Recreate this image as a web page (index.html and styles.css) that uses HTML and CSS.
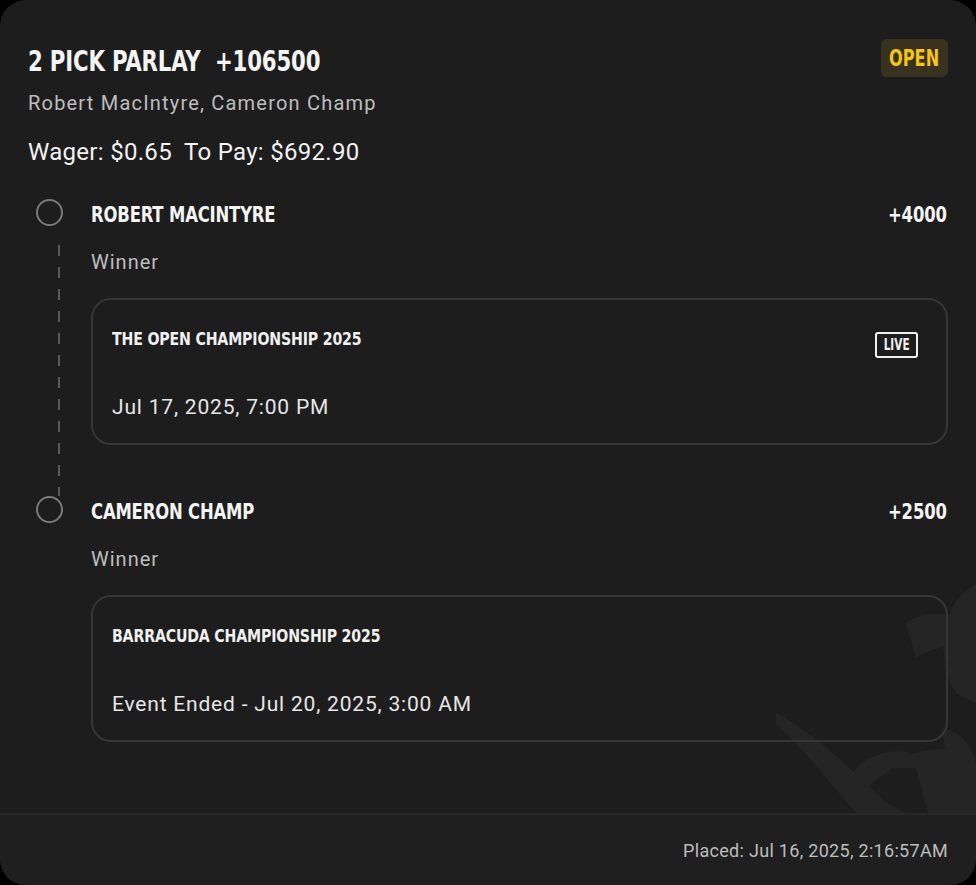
FILE: index.html
```html
<!DOCTYPE html>
<html>
<head>
<meta charset="utf-8">
<link rel="stylesheet" href="styles.css">
</head>
<body>
<div class="card">
  <svg class="watermark" width="240" height="260" viewBox="0 0 240 260" aria-hidden="true">
    <path d="M228 40 C 205 60, 200 110, 220 140 L 240 150 L 240 30 Z" />
    <path d="M170 70 C 190 55, 220 60, 240 70 L 240 95 C 215 90, 195 95, 180 105 Z" />
    <path d="M40 160 C 70 175, 110 210, 150 250 L 170 260 L 120 260 C 95 230, 70 200, 40 170 Z" />
    <path d="M150 215 C 170 200, 200 190, 225 200 L 232 260 L 192 260 L 180 215 Z" />
    <path d="M205 175 C 230 180, 240 200, 240 215 L 240 260 L 214 260 C 214 230, 212 205, 205 175 Z" />
    <path d="M120 215 C 135 200, 160 195, 175 200 L 130 235 C 120 235, 115 225, 120 215 Z" />
  </svg>
  <div class="main">
    <div class="header">
      <div class="header-text">
        <h1 class="title"><span class="squeeze">2 PICK PARLAY&nbsp; +106500</span></h1>
        <p class="players">Robert MacIntyre, Cameron Champ</p>
        <p class="wager">Wager: $0.65&nbsp; To Pay: $692.90</p>
      </div>
      <span class="status"><span class="squeeze-c">OPEN</span></span>
    </div>

    <div class="legs">
      <div class="leg">
        <div class="rail">
          <span class="dot"></span>
          <span class="dash"></span>
        </div>
        <div class="leg-body">
          <div class="leg-head">
            <span class="leg-name">ROBERT MACINTYRE</span>
            <span class="leg-odds">+4000</span>
          </div>
          <div class="leg-market">Winner</div>
          <div class="event">
            <div class="event-head">
              <span class="event-name">THE OPEN CHAMPIONSHIP 2025</span>
              <span class="live"><span class="squeeze-c">LIVE</span></span>
            </div>
            <div class="event-time">Jul 17, 2025, 7:00 PM</div>
          </div>
        </div>
      </div>

      <div class="leg last">
        <div class="rail">
          <span class="dot"></span>
        </div>
        <div class="leg-body">
          <div class="leg-head">
            <span class="leg-name">CAMERON CHAMP</span>
            <span class="leg-odds">+2500</span>
          </div>
          <div class="leg-market">Winner</div>
          <div class="event">
            <div class="event-head">
              <span class="event-name">BARRACUDA CHAMPIONSHIP 2025</span>
            </div>
            <div class="event-time">Event Ended - Jul 20, 2025, 3:00 AM</div>
          </div>
        </div>
      </div>
    </div>
  </div>
  <div class="footer">
    <span class="placed">Placed: Jul 16, 2025, 2:16:57AM</span>
  </div>
</div>
</body>
</html>
```

FILE: styles.css
```css
* { box-sizing: border-box; }
html, body { margin: 0; padding: 0; background: #000; }
body { width: 976px; height: 885px; overflow: hidden; font-family: Roboto, "Liberation Sans", sans-serif; }

.card {
  position: relative;
  width: 976px;
  height: 885px;
  background: #1d1d1d;
  border-radius: 26px;
  overflow: hidden;
  display: flex;
  flex-direction: column;
}

.watermark {
  position: absolute;
  right: 0;
  bottom: 72px;
  fill: #252525;
}

.main {
  position: relative;
  flex: 1;
  padding: 40px 28px 0 28px;
}

.header {
  display: flex;
  justify-content: space-between;
  align-items: flex-start;
}

.title {
  margin: 0;
  font-family: "DejaVu Sans Condensed", sans-serif;
  font-weight: 700;
  font-size: 29px;
  line-height: 42px;
  color: #f4f4f4;
  letter-spacing: -0.2px;
  white-space: nowrap;
}
.squeeze {
  display: inline-block;
  transform: scaleX(0.815);
  transform-origin: left center;
}

.players {
  margin: 9px 0 0;
  font-size: 20px;
  line-height: 24px;
  color: #bdbdbd;
  letter-spacing: 1.2px;
}

.wager {
  margin: 22px 0 0;
  font-size: 24px;
  line-height: 30px;
  color: #f2f2f2;
  letter-spacing: 0.3px;
}

.status {
  margin-top: -1px;
  width: 67px;
  height: 38px;
  border-radius: 6px;
  background: #39321f;
  color: #f5c518;
  font-family: "DejaVu Sans Condensed", sans-serif;
  font-weight: 700;
  font-size: 23px;
  display: flex;
  align-items: center;
  justify-content: center;
}
.squeeze-c {
  display: inline-block;
  transform: scaleX(0.78);
  transform-origin: center center;
}

.legs {
  margin-top: 32px;
  display: flex;
  flex-direction: column;
}

.leg {
  display: flex;
}

.rail {
  width: 63px;
  flex: none;
  display: flex;
  flex-direction: column;
}

.dot {
  margin-left: 8px;
  width: 27px;
  height: 27px;
  border: 2px solid #7a7a7a;
  border-radius: 50%;
  flex: none;
}

.dash {
  flex: 1;
  margin: 19px 0 0 30px;
  width: 2px;
  background: repeating-linear-gradient(to bottom, #5a5a5a 0 11px, transparent 11px 22px);
}

.leg-body {
  flex: 1;
  padding-bottom: 51px;
}

.leg.last .leg-body { padding-bottom: 0; }

.leg-head {
  display: flex;
  justify-content: space-between;
  align-items: center;
  height: 32px;
}

.leg-name, .leg-odds {
  display: inline-block;
  font-family: "DejaVu Sans Condensed", sans-serif;
  font-weight: 700;
  font-size: 22px;
  line-height: 32px;
  color: #f4f4f4;
  letter-spacing: -0.2px;
  transform: scaleX(0.83);
}
.leg-name { transform-origin: left center; }
.leg-odds { transform-origin: right center; margin-right: 1px; }

.leg-market {
  margin-top: 19px;
  font-size: 20px;
  line-height: 24px;
  color: #bdbdbd;
  letter-spacing: 1px;
}

.event {
  margin-top: 24px;
  height: 147px;
  border: 2px solid #363636;
  border-radius: 20px;
  padding: 27px 28px 0 19px;
}

.event-head {
  display: flex;
  justify-content: space-between;
  align-items: flex-start;
  height: 24px;
}

.event-name {
  display: inline-block;
  font-family: "DejaVu Sans Condensed", sans-serif;
  font-weight: 700;
  font-size: 18px;
  line-height: 24px;
  color: #f0f0f0;
  letter-spacing: -0.2px;
  transform: scaleX(0.875);
  transform-origin: left center;
  white-space: nowrap;
}

.live {
  margin-top: 5px;
  width: 43px;
  height: 26px;
  border: 2px solid #f0f0f0;
  border-radius: 3px;
  font-family: "DejaVu Sans Condensed", sans-serif;
  font-weight: 700;
  font-size: 15px;
  color: #f0f0f0;
  display: flex;
  align-items: center;
  justify-content: center;
}

.event-time {
  margin-top: 42px;
  font-size: 21px;
  line-height: 28px;
  color: #e6e6e6;
  letter-spacing: 0.8px;
}

.footer {
  position: relative;
  flex: none;
  height: 72px;
  border-top: 2px solid #282828;
  background: #1f1f1f;
  display: flex;
  align-items: center;
  justify-content: flex-end;
  padding: 0 28px 0 0;
}

.placed {
  font-size: 18px;
  color: #bdbdbd;
  letter-spacing: 0.3px;
}
```
